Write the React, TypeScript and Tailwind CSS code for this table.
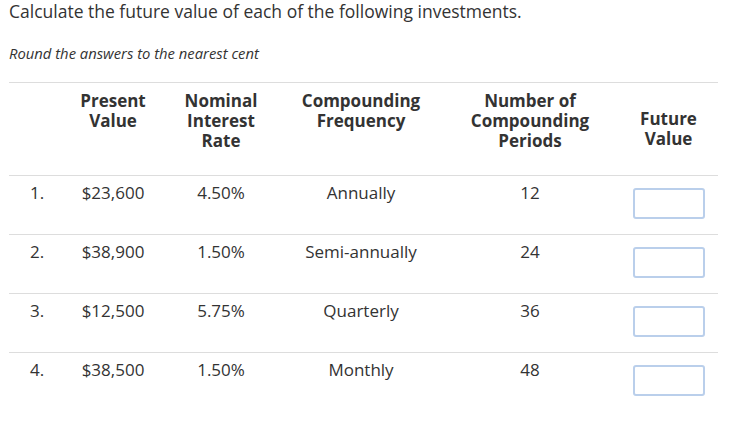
import React from 'react';

type Row = { n: string; pv: string; rate: string; freq: string; periods: string };

const rows: Row[] = [
  { n: '1.', pv: '$23,600', rate: '4.50%', freq: 'Annually', periods: '12' },
  { n: '2.', pv: '$38,900', rate: '1.50%', freq: 'Semi-annually', periods: '24' },
  { n: '3.', pv: '$12,500', rate: '5.75%', freq: 'Quarterly', periods: '36' },
  { n: '4.', pv: '$38,500', rate: '1.50%', freq: 'Monthly', periods: '48' },
];

export default function App() {
  return (
    <div className="min-h-[435px] bg-white pl-[9px] pr-[11px] text-[#333] font-['Open_Sans',sans-serif]">
      <p className="mt-[1px] text-[17.5px] leading-[20px]">Calculate the future value of each of the following investments.</p>
      <p className="mt-[22px] text-[14.8px] italic leading-[20px]">Round the answers to the nearest cent</p>

      <table className="mt-[19px] w-[709px] table-fixed border-collapse">
        <colgroup>
          <col className="w-[56px]" />
          <col className="w-[96px]" />
          <col className="w-[120px]" />
          <col className="w-[160px]" />
          <col className="w-[178px]" />
          <col className="w-[99px]" />
        </colgroup>
        <thead>
          <tr className="border-t border-[#dddddd] text-[17px] font-bold leading-[20px]">
            <th className="pt-2 pb-[24px] align-top"></th>
            <th className="pt-2 pb-[24px] align-top">Present<br />Value</th>
            <th className="pt-2 pb-[24px] align-top">Nominal<br />Interest<br />Rate</th>
            <th className="pt-2 pb-[24px] align-top">Compounding<br />Frequency</th>
            <th className="pt-2 pb-[24px] align-top">Number of<br />Compounding<br />Periods</th>
            <th className="pt-[26px] pb-[24px] align-top">Future<br />Value</th>
          </tr>
        </thead>
        <tbody>
          {rows.map((r) => (
            <tr key={r.n} className="border-t border-[#dddddd] text-[17px] leading-[22px]">
              <td className="pt-[6px] align-top text-center">{r.n}</td>
              <td className="pt-[6px] align-top text-center">{r.pv}</td>
              <td className="pt-[6px] align-top text-center">{r.rate}</td>
              <td className="pt-[6px] align-top text-center">{r.freq}</td>
              <td className="pt-[6px] align-top text-center">{r.periods}</td>
              <td className="pt-[12px] pb-[15px] align-top">
                <input
                  type="text"
                  className="mx-auto block h-[31px] w-[72px] rounded-[3px] border-2 border-[#bacfeb] bg-white outline-none"
                />
              </td>
            </tr>
          ))}
        </tbody>
      </table>
    </div>
  );
}
